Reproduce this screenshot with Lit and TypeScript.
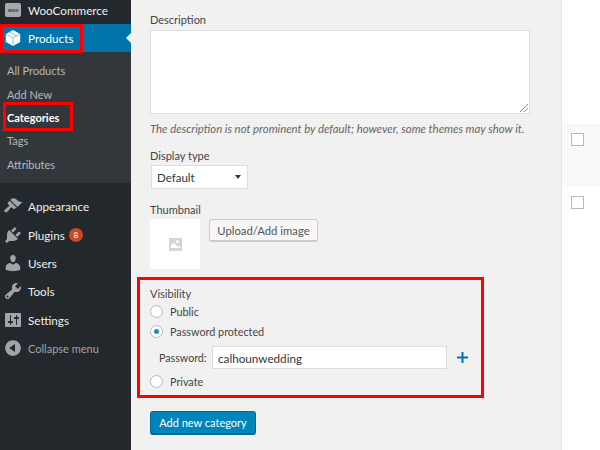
import { LitElement, html, css, svg } from "lit";
import { customElement } from "lit/decorators.js";

const paths: Record<string, string> = {
  appearance: "M14.48 11.06L7.41 3.99l1.5-1.5c.5-.56 2.3-.47 3.51.32 1.21.8 1.43 1.28 2.91 2.1 1.18.64 2.45 1.26 4.45.85zm-.71.71L6.7 4.7 4.93 6.47c-.39.39-.39 1.02 0 1.41l1.06 1.06c.39.39.39 1.03 0 1.42-.6.6-1.43 1.11-2.21 1.69-.35.26-.7.53-1.01.84C1.43 13.23 1 14.8 1.6 15.8c.6 1 2.17.57 3.5-.77.31-.31.58-.66.84-1.01.58-.78 1.09-1.61 1.69-2.21.39-.39 1.02-.39 1.41 0l1.06 1.06c.39.39 1.02.39 1.41 0z",
  plugins: "M13.11 4.36L9.87 7.6 8 5.73l3.24-3.24c.35-.34 1.05-.2 1.56.32.52.51.66 1.21.31 1.55zm-8 1.77l.91-1.12 9.01 9.01-1.19.84c-.71.71-2.63 1.16-3.82 1.16H6.14L4.9 17.26c-.59.59-1.54.59-2.12 0-.59-.58-.59-1.53 0-2.12l1.24-1.24v-3.88c0-1.13.4-3.19 1.09-3.89zm7.26 3.97l3.24-3.24c.34-.35 1.04-.21 1.55.31.52.51.66 1.21.31 1.55l-3.24 3.25z",
  users: "M10 9.25c-2.27 0-2.73-3.44-2.73-3.44C7 4.02 7.82 2 9.97 2c2.16 0 2.98 2.02 2.71 3.81 0 0-.41 3.44-2.68 3.44zm0 2.57L12.72 10c2.39 0 4.52 2.33 4.52 4.53v2.49s-3.65 1.13-7.24 1.13c-3.65 0-7.24-1.13-7.24-1.13v-2.49c0-2.25 1.94-4.48 4.47-4.48z",
  tools: "M16.68 9.77c-1.34 1.34-3.3 1.67-4.95.99l-5.41 6.52c-.99.99-2.59.99-3.58 0s-.99-2.59 0-3.57l6.52-5.42c-.68-1.65-.35-3.61.99-4.95 1.28-1.28 3.12-1.62 4.72-1.06l-2.89 2.89 2.82 2.82 2.86-2.87c.53 1.58.18 3.39-1.08 4.65zM3.81 16.21c.4.39 1.04.39 1.43 0 .4-.4.4-1.04 0-1.43-.39-.4-1.03-.4-1.43 0-.39.39-.39 1.03 0 1.43z",
  settings: "M18 16V4c0-.55-.45-1-1-1H3c-.55 0-1 .45-1 1v12c0 .55.45 1 1 1h14c.55 0 1-.45 1-1zM8 11h1c.55 0 1 .45 1 1s-.45 1-1 1H8v1.500c0 .28-.22.5-.5.5s-.5-.22-.5-.5V13H6c-.55 0-1-.45-1-1s.45-1 1-1h1V5.500c0-.28.22-.5.5-.5s.5.22.5.5V11zm5-2h-1c-.55 0-1-.45-1-1s.45-1 1-1h1V5.500c0-.28.22-.5.5-.5s.5.22.5.5V7h1c.55 0 1 .45 1 1s-.45 1-1 1h-1v5.500c0 .28-.22.5-.5.5s-.5-.22-.5-.5V9z",
  collapse: "M10 2.160c4.330 0 7.840 3.510 7.840 7.840s-3.510 7.840-7.840 7.840S2.160 14.330 2.160 10 5.710 2.160 10 2.160zm2 11.720V6.120L6.180 9.960z",
};

const icon = (name: string) =>
  html`<svg viewBox="0 0 20 20" width="20" height="20">${svg`<path fill="#a0a5aa" fill-rule="evenodd" d=${paths[name]}></path>`}</svg>`;

@customElement("app-root")
export class AppRoot extends LitElement {
  static styles = css`
    :host {
      display: block;
      width: 600px;
      height: 450px;
      overflow: hidden;
      position: relative;
      background: #f1f1f1;
      font-family: "Lato", "Open Sans", sans-serif;
      font-size: 11px;
      color: #444;
    }
    .page { display: flex; height: 450px; }
    .side { width: 131px; flex: none; background: #23282d; color: #eee; }
    .woo { height: 24px; display: flex; align-items: center; }
    .row { display: flex; align-items: center; height: 28.4px; font-size: 11.7px; color: #eee; }
    .ico { width: 26px; margin-right: 2px; flex: none; display: flex; justify-content: center; }
    .woo-ico {
      width: 16px; height: 14px; margin: -4px 0 0 5px; background: #a7aaad; border-radius: 2px;
      font-size: 5.500px; font-weight: 700; color: #32373c; display: flex; align-items: center; justify-content: center;
    }
    .woo .lbl { margin: -4px 0 0 7px; font-size: 11.700px; }
    .active { height: 28px; background: #0073aa; color: #fff; position: relative; }
    .active::after {
      content: "";
      position: absolute;
      right: 0;
      top: 9px;
      border: 5.500px solid transparent;
      border-right-color: #f1f1f1;
      border-left-width: 0;
    }
    .sub {
      background: #32373c;
      height: 131px;
      padding: 7px 0 0 7px;
      box-sizing: border-box;
      display: flex;
      flex-direction: column;
      color: #b4b9be;
      font-size: 11px;
      margin-bottom: 9px;
    }
    .sub div { height: 23.4px; display: flex; align-items: center; }
    .sub .cur { color: #fff; font-weight: 700; }
    .collapse { color: #a0a5aa; font-size: 11px; }
    .badge {
      margin-left: 4px;
      width: 14px;
      height: 14px;
      border-radius: 50%;
      background: #ca4a1f;
      color: #fff;
      font-size: 8px;
      display: flex;
      align-items: center;
      justify-content: center;
    }
    .main {
      width: 430px;
      flex: none;
      box-sizing: border-box;
      padding: 12px 0 0 19px;
      display: flex;
      flex-direction: column;
    }
    .label { line-height: 15px; color: #444; }
    .ta {
      width: 380px;
      height: 84px;
      box-sizing: border-box;
      margin-top: 3px;
      background: #fff;
      border: 1px solid #ddd;
      position: relative;
    }
    .grip { position: absolute; right: 0; bottom: 0; }
    .hint { font-style: italic; color: #666; font-size: 11.350px; line-height: 15px; margin-top: 7px; white-space: nowrap; }
    .dt { margin-top: 12px; }
    .select {
      width: 97px;
      height: 24px;
      box-sizing: border-box;
      margin: 2px 0 0 1px;
      background: #fff;
      border: 1px solid #ddd;
      display: flex;
      align-items: center;
      justify-content: space-between;
      padding: 0 6px 0 5px;
      font-size: 11.500px;
      color: #32373c;
    }
    .caret { width: 0; height: 0; border: 3px solid transparent; border-top: 4px solid #333; border-bottom: 0; margin-top: -1px; }
    .th-l { margin-top: 13px; }
    .thumb-row { display: flex; gap: 9px; margin-top: 2px; }
    .thumb { width: 50px; height: 50px; background: #fff; display: flex; align-items: center; justify-content: center; }
    .btn {
      height: 23px;
      width: 109px;
      box-sizing: border-box;
      border: 1px solid #ccc;
      border-bottom-width: 2px;
      border-radius: 3px;
      background: #f7f7f7;
      color: #555;
      font-size: 11.300px;
      display: flex;
      align-items: center;
      justify-content: center;
    }
    .vis { margin-top: 17px; display: flex; flex-direction: column; }
    .radio { display: flex; align-items: center; gap: 7px; height: 20px; font-size: 10.800px; }
    .dot {
      width: 13px;
      height: 13px;
      box-sizing: border-box;
      border-radius: 50%;
      background: #fff;
      border: 1px solid #b4b9be;
      display: flex;
      align-items: center;
      justify-content: center;
    }
    .dot.on::after { content: ""; width: 5px; height: 5px; border-radius: 50%; background: #1e8cbe; }
    .pw { display: flex; align-items: center; height: 23px; margin: 5px 0 2px 9px; }
    .pw-l { width: 48px; flex: none; font-size: 10.700px; }
    .pw .in {
      width: 235px;
      height: 23px;
      box-sizing: border-box;
      margin-left: 5px;
      background: #fff;
      border: 1px solid #ddd;
      padding-left: 5px;
      display: flex;
      align-items: center;
      font-size: 11.700px;
      color: #32373c;
    }
    .plus { margin-left: 10px; display: flex; }
    .primary {
      margin-top: 20px;
      width: 106px;
      height: 24px;
      box-sizing: border-box;
      background: #0085ba;
      border: 1px solid #006799;
      border-bottom-width: 2px;
      border-radius: 3px;
      color: #fff;
      display: flex;
      align-items: center;
      justify-content: center;
    }
    .right { flex: 1; background: #fff; border-left: 1px solid #e5e5e5; padding-top: 124px; }
    .tr { height: 63px; box-sizing: border-box; padding: 9px 0 0 9px; }
    .tr.alt { background: #f9f9f9; }
    .cb { width: 13px; height: 13px; box-sizing: border-box; border: 1px solid #b4b9be; background: #fff; }
    .mark { position: absolute; border: 3px solid #ff0000; box-sizing: border-box; pointer-events: none; }
    .m1 { left: 0; top: 24px; width: 83px; height: 29px; }
    .m2 { left: 2.500px; top: 102px; width: 70px; height: 28.500px; }
    .m3 { left: 136.500px; top: 276.500px; width: 347px; height: 121px; }
  `;

  private item(name: string, label: unknown) {
    return html`<div class="row"><span class="ico">${icon(name)}</span><span>${label}</span></div>`;
  }

  render() {
    return html`
      <div class="page">
        <nav class="side">
          <div class="woo"><span class="woo-ico">woo</span><span class="lbl">WooCommerce</span></div>
          <div class="row active">
            <span class="ico"><svg viewBox="0 0 20 20" width="18" height="18">
              <path fill="#fff" d="M10 1 18 5.500v9L10 19l-8-4.500v-9z"/>
              <path fill="none" stroke="#7fb9d4" stroke-width="1" d="M2 5.500 10 10l8-4.500M6 3.300l8 4.500M10 10v9"/>
            </svg></span>
            <span>Products</span>
          </div>
          <div class="sub">
            <div>All Products</div>
            <div>Add New</div>
            <div class="cur">Categories</div>
            <div>Tags</div>
            <div>Attributes</div>
          </div>
          ${this.item("appearance", "Appearance")}
          <div class="row"><span class="ico">${icon("plugins")}</span><span>Plugins</span><span class="badge">8</span></div>
          ${this.item("users", "Users")}
          ${this.item("tools", "Tools")}
          ${this.item("settings", "Settings")}
          <div class="row collapse">
            <span class="ico">${icon("collapse")}</span>
            <span>Collapse menu</span>
          </div>
        </nav>
        <main class="main">
          <div class="label">Description</div>
          <div class="ta">
            <svg class="grip" width="10" height="10" viewBox="0 0 10 10"><path d="M1 9 9 1M5 9l4-4" stroke="#888" fill="none"/></svg>
          </div>
          <div class="hint">The description is not prominent by default; however, some themes may show it.</div>
          <div class="label dt">Display type</div>
          <div class="select"><span>Default</span><span class="caret"></span></div>
          <div class="label th-l">Thumbnail</div>
          <div class="thumb-row">
            <div class="thumb">
              <svg width="15" height="15" viewBox="0 0 15 15"><path fill="#d5d5d5" fill-rule="evenodd" d="M1 1h13v13H1zm8.500 2a1.500 1.500 0 1 0 0 3 1.500 1.500 0 0 0 0-3zM3 4v4l3 -2 4 4 2 -1V11H3z"/></svg>
            </div>
            <div class="btn">Upload/Add image</div>
          </div>
          <div class="vis">
            <div class="label">Visibility</div>
            <div class="radio"><span class="dot"></span>Public</div>
            <div class="radio"><span class="dot on"></span>Password protected</div>
            <div class="pw">
              <span class="pw-l">Password:</span><span class="in">calhounwedding</span>
              <span class="plus"><svg width="11" height="11" viewBox="0 0 11 11"><path fill="#0073aa" d="M4.500 0h2v4.500H11v2H6.500V11h-2V6.500H0v-2h4.500z"/></svg></span>
            </div>
            <div class="radio"><span class="dot"></span>Private</div>
          </div>
          <div class="primary">Add new category</div>
        </main>
        <aside class="right">
          <div class="tr alt"><div class="cb"></div></div>
          <div class="tr"><div class="cb"></div></div>
        </aside>
      </div>
      <div class="mark m1"></div>
      <div class="mark m2"></div>
      <div class="mark m3"></div>
    `;
  }
}
